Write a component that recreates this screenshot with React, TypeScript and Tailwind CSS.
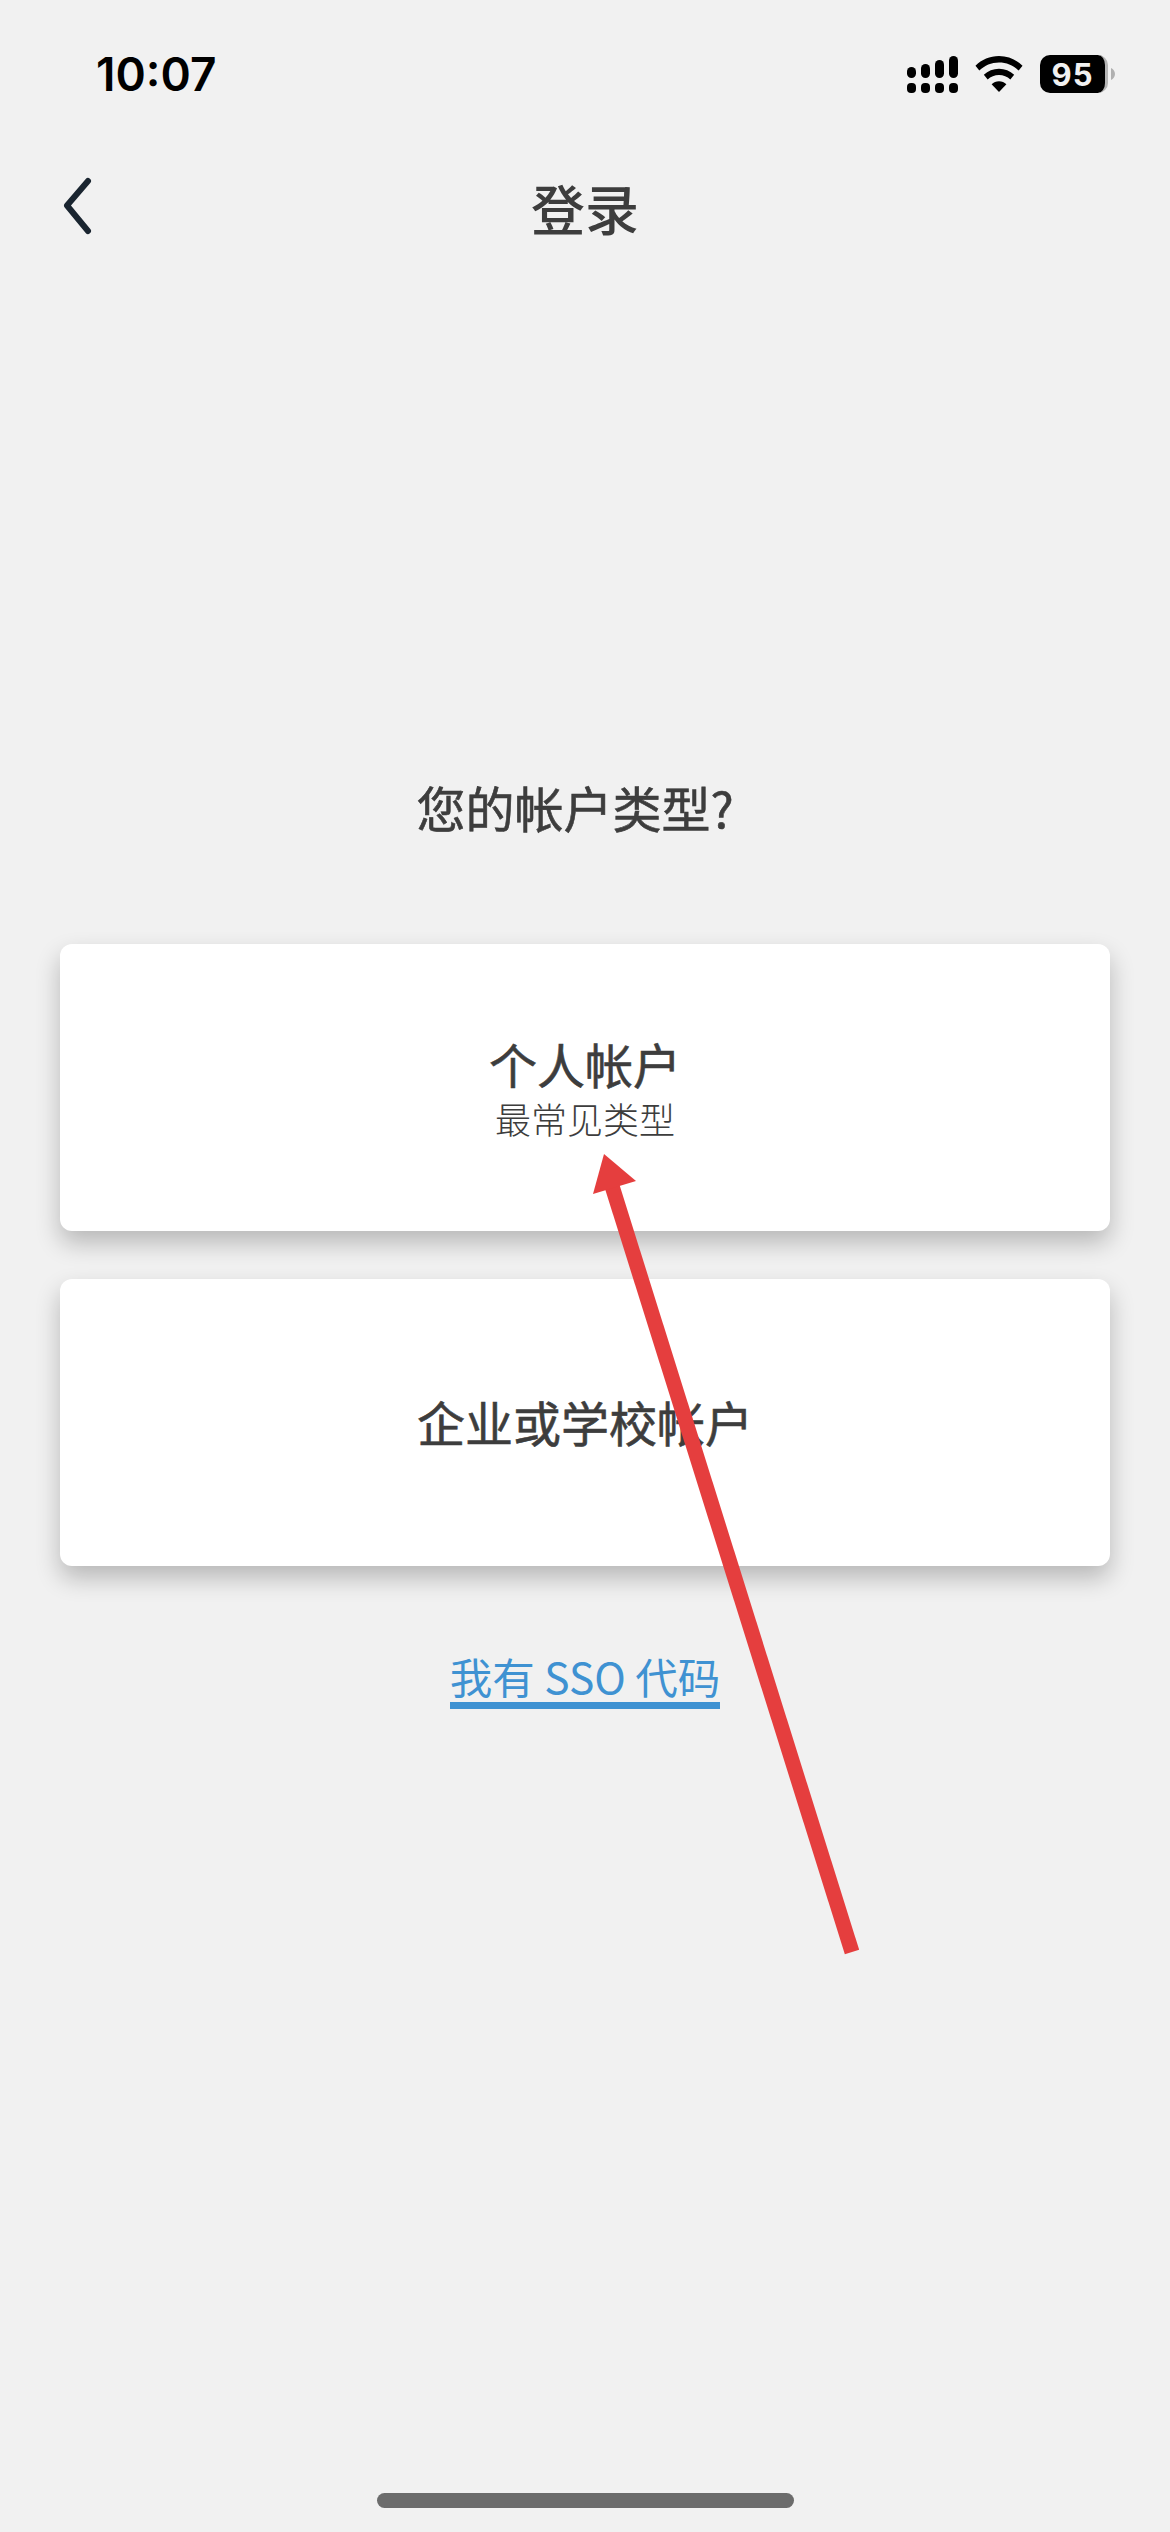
import React from 'react';

const FONT = "font-['Noto_Sans_CJK_SC','Noto_Sans',sans-serif]";

function SignalIcon() {
  return (
    <svg width="51" height="37" viewBox="0 0 51 37" fill="#000">
      <rect x="0" y="11" width="9" height="11" rx="4.5" />
      <rect x="14" y="8" width="9" height="14" rx="4.5" />
      <rect x="28" y="4" width="9" height="18" rx="4.5" />
      <rect x="42" y="0" width="9" height="22" rx="4.5" />
      <rect x="0" y="27" width="9" height="10" rx="4" />
      <rect x="14" y="27" width="9" height="10" rx="4" />
      <rect x="28" y="27" width="9" height="10" rx="4" />
      <rect x="42" y="27" width="9" height="10" rx="4" />
    </svg>
  );
}

function WifiIcon() {
  return (
    <svg width="48" height="36" viewBox="0 0 50 37" fill="#000" preserveAspectRatio="none">
      <path d="M25 0C34.5 0 43 3.7 49.5 10L45.5 15C40 9.6 32.9 6.6 25 6.6S10 9.6 4.500 15L0.500 10C7 3.700 15.500 0 25 0Z" />
      <path d="M25 13C31 13 36.500 15.300 40.800 19.300L36.800 24.200C33.600 21.300 29.500 19.600 25 19.600S16.400 21.300 13.200 24.200L9.200 19.300C13.500 15.300 19 13 25 13Z" />
      <path d="M25 26C27.900 26 30.600 27.100 32.700 29L25 37L17.300 29C19.400 27.100 22.100 26 25 26Z" />
    </svg>
  );
}

function BatteryIcon() {
  return (
    <div className="flex items-center gap-[3px]">
      <div className="flex h-[38px] w-[68px] items-center justify-center rounded-[10px] border-r-[3px] border-[#b5b5b5] bg-black font-['Inter',sans-serif] text-[31px] leading-none font-bold tracking-[1px] text-[#f1f1f1]">
        95
      </div>
      <svg width="4" height="12" viewBox="0 0 5 12" fill="#b0b0b0" preserveAspectRatio="none">
        <path d="M0 0C3 1 5 3.500 5 6S3 11 0 12Z" />
      </svg>
    </div>
  );
}

function BackIcon() {
  return (
    <svg width="30" height="60" viewBox="0 0 30 60" fill="none" stroke="#1a2530" strokeWidth="6" strokeLinecap="round" strokeLinejoin="round">
      <path d="M26 5L5 29.500L26 55" />
    </svg>
  );
}

function AccountCard({ children }: { children: React.ReactNode }) {
  return (
    <button
      type="button"
      className="flex h-[287px] w-full flex-col items-center justify-center rounded-[12px] bg-white pb-[4px] text-[#3d3d3d] shadow-[0_12px_24px_rgba(0,0,0,0.24)]"
    >
      {children}
    </button>
  );
}

export default function App() {
  return (
    <div className={`relative flex h-[2532px] w-[1170px] flex-col overflow-hidden bg-[#f1f1f1] ${FONT}`}>
      <div className="flex h-[130px] shrink-0 items-start justify-between pt-[46px] pr-[55px] pl-[96px]">
        <div className="font-['Inter',sans-serif] text-[46px] leading-[56px] font-semibold text-black">10:07</div>
        <div className="flex items-center gap-[17px] pt-[9px]">
          <SignalIcon />
          <WifiIcon />
          <BatteryIcon />
        </div>
      </div>

      <div className="relative flex h-[156px] shrink-0 items-center justify-center">
        <button type="button" className="absolute top-[46px] left-[62px]">
          <BackIcon />
        </button>
        <div className="text-[54px] leading-[70px] font-medium text-[#3d3d3d]">登录</div>
      </div>

      <div className="mt-[489px] pr-[20px] text-center text-[49px] leading-[64px] text-[#3d3d3d] [-webkit-text-stroke:0.6px_#3d3d3d]">您的帐户类型?</div>

      <div className="mt-[105px] flex flex-col gap-[48px] px-[60px]">
        <AccountCard>
          <div className="text-[48px] leading-[58px] [-webkit-text-stroke:0.6px_#3d3d3d]">个人帐户</div>
          <div className="mt-[3px] -mb-[3px] text-[36px] leading-[46px] font-light">最常见类型</div>
        </AccountCard>
        <AccountCard>
          <div className="text-[48px] leading-[58px] [-webkit-text-stroke:0.6px_#3d3d3d]">企业或学校帐户</div>
        </AccountCard>
      </div>

      <div className="mt-[84px] text-center">
        <a className="inline-block border-b-[7px] border-[#3f92d2] text-[42.5px] leading-[52px] text-[#3f92d2]">我有 SSO 代码</a>
      </div>

      {/* red annotation arrow, sits over the cards */}
      <svg className="absolute top-0 left-0" width="1170" height="2532" viewBox="0 0 1170 2532">
        <path d="M852 1952L612 1186" stroke="#e53e3e" strokeWidth="15" fill="none" />
        <path d="M604 1154L593 1194L636 1181Z" fill="#e53e3e" />
      </svg>

      <div className="absolute bottom-[24px] left-[377px] h-[15px] w-[417px] rounded-full bg-[#6c6c6c]" />
    </div>
  );
}
